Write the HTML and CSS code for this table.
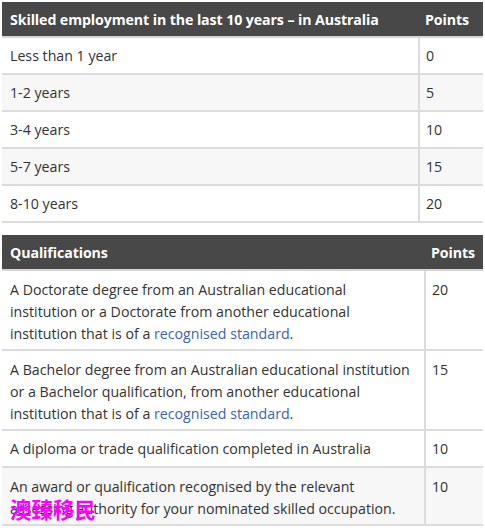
FILE: index.html
```html
<!DOCTYPE html>
<html>
<head>
<meta charset="utf-8">
<link rel="stylesheet" href="styles.css">
</head>
<body>
<div class="page">
  <table class="pts pts-a">
    <colgroup><col class="c1"><col class="c2"></colgroup>
    <thead>
      <tr><th>Skilled employment in the last 10 years – in Australia</th><th>Points</th></tr>
    </thead>
    <tbody>
      <tr><td>Less than 1 year</td><td>0</td></tr>
      <tr class="alt"><td>1-2 years</td><td>5</td></tr>
      <tr><td>3-4 years</td><td>10</td></tr>
      <tr class="alt"><td>5-7 years</td><td>15</td></tr>
      <tr><td>8-10 years</td><td>20</td></tr>
    </tbody>
  </table>

  <table class="pts pts-b">
    <colgroup><col class="c1"><col class="c2"></colgroup>
    <thead>
      <tr><th>Qualifications</th><th>Points</th></tr>
    </thead>
    <tbody>
      <tr class="tall"><td>A Doctorate degree from an Australian educational institution or a Doctorate from another educational institution that is of a <a href="#">recognised standard</a>.</td><td>20</td></tr>
      <tr class="tall"><td>A Bachelor degree from an Australian educational institution or a Bachelor qualification, from another educational institution that is of a <a href="#">recognised standard</a>.</td><td>15</td></tr>
      <tr><td>A diploma or trade qualification completed in Australia</td><td>10</td></tr>
      <tr class="tall alt"><td>An award or qualification recognised by the relevant assessing authority for your nominated skilled occupation.</td><td>10</td></tr>
    </tbody>
  </table>
  <div class="mark">澳臻移民</div>
</div>
</body>
</html>
```
FILE: styles.css
```css
html, body {
  margin: 0;
  padding: 0;
  background: #ffffff;
}
.page {
  position: relative;
  padding: 2px 2px 0 2px;
  font-family: "Open Sans", "Noto Sans", sans-serif;
  color: #333333;
}
.pts {
  width: 481px;
  border-collapse: collapse;
  table-layout: fixed;
  font-size: 14.2px;
}
.pts-a .c1 { width: 417px; }
.pts-a .c2 { width: 64px; }
.pts-b { margin-top: 12px; }
.pts-b .c1 { width: 423px; }
.pts-b .c2 { width: 58px; }

.pts th {
  background: #484848;
  color: #ffffff;
  font-weight: 700;
  text-align: left;
  height: 35px;
  padding: 0 8px;
  box-sizing: border-box;
  font-size: 14.2px;
  letter-spacing: -0.1px;
  border-bottom: 2px solid #d6d6d6;
}
.pts th + th { padding-left: 6px; }
.pts td {
  height: 37px;
  box-sizing: border-box;
  padding: 0 12px 0 8px;
  border-bottom: 2px solid #dcdcdc;
  vertical-align: middle;
  line-height: 22px;
}
.pts td + td {
  border-left: 2px solid #dcdcdc;
  padding-left: 6px;
  padding-right: 4px;
}
.pts tr.alt td { background: #f7f7f7; }
.pts tr.tall td {
  vertical-align: top;
  padding-top: 8px;
  padding-bottom: 4px;
}
.pts a {
  color: #3b63b8;
  text-decoration: none;
}
.mark {
  position: absolute;
  left: 10px;
  top: 496px;
  font-family: "Noto Sans CJK SC", sans-serif;
  font-weight: 700;
  font-size: 21.5px;
  line-height: 26px;
  color: #ff00ff;
}
```
